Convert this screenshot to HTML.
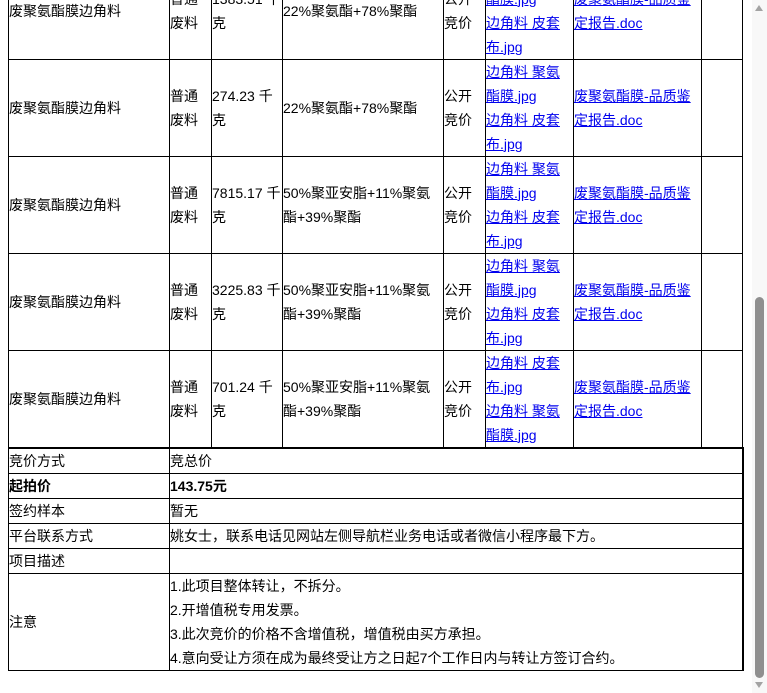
<!DOCTYPE html>
<html><head><meta charset="utf-8"><style>
body{margin:0;width:767px;height:693px;overflow:hidden;background:#fff;position:relative;font-family:"Liberation Sans","Noto Sans CJK SC",sans-serif;font-size:14px;color:#000;}
.c{position:absolute;display:flex;align-items:center;padding-left:1px;box-sizing:border-box;line-height:24px;white-space:nowrap;}
.v{position:absolute;width:1px;background:#000;}
.h{position:absolute;height:1px;background:#000;}
a{color:#0000ee;text-decoration:underline;}
b{font-weight:bold;}
</style></head><body>
<div class="v" style="left:8px;top:0;height:447px"></div>
<div class="v" style="left:169px;top:0;height:447px"></div>
<div class="v" style="left:211px;top:0;height:447px"></div>
<div class="v" style="left:282px;top:0;height:447px"></div>
<div class="v" style="left:443px;top:0;height:447px"></div>
<div class="v" style="left:485px;top:0;height:447px"></div>
<div class="v" style="left:573px;top:0;height:447px"></div>
<div class="v" style="left:701px;top:0;height:447px"></div>
<div class="v" style="left:742px;top:0;height:447px"></div>
<div class="h" style="left:8px;top:59px;width:735px"></div>
<div class="h" style="left:8px;top:156px;width:735px"></div>
<div class="h" style="left:8px;top:253px;width:735px"></div>
<div class="h" style="left:8px;top:350px;width:735px"></div>

<div class="c" style="left:8px;top:-38px;width:161px;height:97px">废聚氨酯膜边角料</div>
<div class="c" style="left:169px;top:-38px;width:42px;height:97px">普通<br>废料</div>
<div class="c" style="left:211px;top:-38px;width:71px;height:97px">1383.51 千<br>克</div>
<div class="c" style="left:282px;top:-38px;width:161px;height:97px">22%聚氨酯+78%聚酯</div>
<div class="c" style="left:443px;top:-38px;width:42px;height:97px">公开<br>竞价</div>
<div class="c" style="left:485px;top:-38px;width:88px;height:97px"><div><a>边角料 聚氨</a><br><a>酯膜.jpg</a><br><a>边角料 皮套</a><br><a>布.jpg</a></div></div>
<div class="c" style="left:573px;top:-38px;width:128px;height:97px"><div><a>废聚氨酯膜-品质鉴</a><br><a>定报告.doc</a></div></div>

<div class="c" style="left:8px;top:59px;width:161px;height:97px">废聚氨酯膜边角料</div>
<div class="c" style="left:169px;top:59px;width:42px;height:97px">普通<br>废料</div>
<div class="c" style="left:211px;top:59px;width:71px;height:97px">274.23 千<br>克</div>
<div class="c" style="left:282px;top:59px;width:161px;height:97px">22%聚氨酯+78%聚酯</div>
<div class="c" style="left:443px;top:59px;width:42px;height:97px">公开<br>竞价</div>
<div class="c" style="left:485px;top:59px;width:88px;height:97px"><div><a>边角料 聚氨</a><br><a>酯膜.jpg</a><br><a>边角料 皮套</a><br><a>布.jpg</a></div></div>
<div class="c" style="left:573px;top:59px;width:128px;height:97px"><div><a>废聚氨酯膜-品质鉴</a><br><a>定报告.doc</a></div></div>

<div class="c" style="left:8px;top:156px;width:161px;height:97px">废聚氨酯膜边角料</div>
<div class="c" style="left:169px;top:156px;width:42px;height:97px">普通<br>废料</div>
<div class="c" style="left:211px;top:156px;width:71px;height:97px">7815.17 千<br>克</div>
<div class="c" style="left:282px;top:156px;width:161px;height:97px">50%聚亚安脂+11%聚氨<br>酯+39%聚酯</div>
<div class="c" style="left:443px;top:156px;width:42px;height:97px">公开<br>竞价</div>
<div class="c" style="left:485px;top:156px;width:88px;height:97px"><div><a>边角料 聚氨</a><br><a>酯膜.jpg</a><br><a>边角料 皮套</a><br><a>布.jpg</a></div></div>
<div class="c" style="left:573px;top:156px;width:128px;height:97px"><div><a>废聚氨酯膜-品质鉴</a><br><a>定报告.doc</a></div></div>

<div class="c" style="left:8px;top:253px;width:161px;height:97px">废聚氨酯膜边角料</div>
<div class="c" style="left:169px;top:253px;width:42px;height:97px">普通<br>废料</div>
<div class="c" style="left:211px;top:253px;width:71px;height:97px">3225.83 千<br>克</div>
<div class="c" style="left:282px;top:253px;width:161px;height:97px">50%聚亚安脂+11%聚氨<br>酯+39%聚酯</div>
<div class="c" style="left:443px;top:253px;width:42px;height:97px">公开<br>竞价</div>
<div class="c" style="left:485px;top:253px;width:88px;height:97px"><div><a>边角料 聚氨</a><br><a>酯膜.jpg</a><br><a>边角料 皮套</a><br><a>布.jpg</a></div></div>
<div class="c" style="left:573px;top:253px;width:128px;height:97px"><div><a>废聚氨酯膜-品质鉴</a><br><a>定报告.doc</a></div></div>

<div class="c" style="left:8px;top:350px;width:161px;height:97px">废聚氨酯膜边角料</div>
<div class="c" style="left:169px;top:350px;width:42px;height:97px">普通<br>废料</div>
<div class="c" style="left:211px;top:350px;width:71px;height:97px">701.24 千<br>克</div>
<div class="c" style="left:282px;top:350px;width:161px;height:97px">50%聚亚安脂+11%聚氨<br>酯+39%聚酯</div>
<div class="c" style="left:443px;top:350px;width:42px;height:97px">公开<br>竞价</div>
<div class="c" style="left:485px;top:350px;width:88px;height:97px"><div><a>边角料 皮套</a><br><a>布.jpg</a><br><a>边角料 聚氨</a><br><a>酯膜.jpg</a></div></div>
<div class="c" style="left:573px;top:350px;width:128px;height:97px"><div><a>废聚氨酯膜-品质鉴</a><br><a>定报告.doc</a></div></div>

<div class="h" style="left:8px;top:447px;width:736px;height:2px"></div>
<div class="v" style="left:8px;top:447px;height:224px"></div>
<div class="v" style="left:742px;top:447px;height:224px;width:2px"></div>
<div class="v" style="left:169px;top:447px;height:224px"></div>
<div class="h" style="left:8px;top:473px;width:735px"></div>
<div class="h" style="left:8px;top:498px;width:735px"></div>
<div class="h" style="left:8px;top:523px;width:735px"></div>
<div class="h" style="left:8px;top:548px;width:735px"></div>
<div class="h" style="left:8px;top:573px;width:735px"></div>
<div class="h" style="left:8px;top:670px;width:736px"></div>

<div class="c" style="left:8px;top:449px;width:161px;height:24px">竞价方式</div>
<div class="c" style="left:169px;top:449px;width:573px;height:24px">竞总价</div>
<div class="c" style="left:8px;top:474px;width:161px;height:24px"><b>起拍价</b></div>
<div class="c" style="left:169px;top:474px;width:573px;height:24px"><b>143.75元</b></div>
<div class="c" style="left:8px;top:499px;width:161px;height:24px">签约样本</div>
<div class="c" style="left:169px;top:499px;width:573px;height:24px">暂无</div>
<div class="c" style="left:8px;top:524px;width:161px;height:24px">平台联系方式</div>
<div class="c" style="left:169px;top:524px;width:573px;height:24px">姚女士，联系电话见网站左侧导航栏业务电话或者微信小程序最下方。</div>
<div class="c" style="left:8px;top:549px;width:161px;height:24px">项目描述</div>
<div class="c" style="left:8px;top:574px;width:161px;height:96px">注意</div>
<div class="c" style="left:169px;top:574px;width:573px;height:96px"><div>1.此项目整体转让，不拆分。<br>2.开增值税专用发票。<br>3.此次竞价的价格不含增值税，增值税由买方承担。<br>4.意向受让方须在成为最终受让方之日起7个工作日内与转让方签订合约。</div></div>

<div style="position:absolute;left:752px;top:0;width:15px;height:693px;background:#f8f8f8"></div>
<div style="position:absolute;left:755px;top:297px;width:9px;height:381px;background:#8f8f8f;border-radius:5px"></div>
<div style="position:absolute;left:755px;top:5px;width:0;height:0;border-left:4.5px solid transparent;border-right:4.5px solid transparent;border-bottom:6px solid #a3a3a3"></div>
<div style="position:absolute;left:755px;top:682px;width:0;height:0;border-left:4.5px solid transparent;border-right:4.5px solid transparent;border-top:6px solid #a3a3a3"></div>
</body></html>
